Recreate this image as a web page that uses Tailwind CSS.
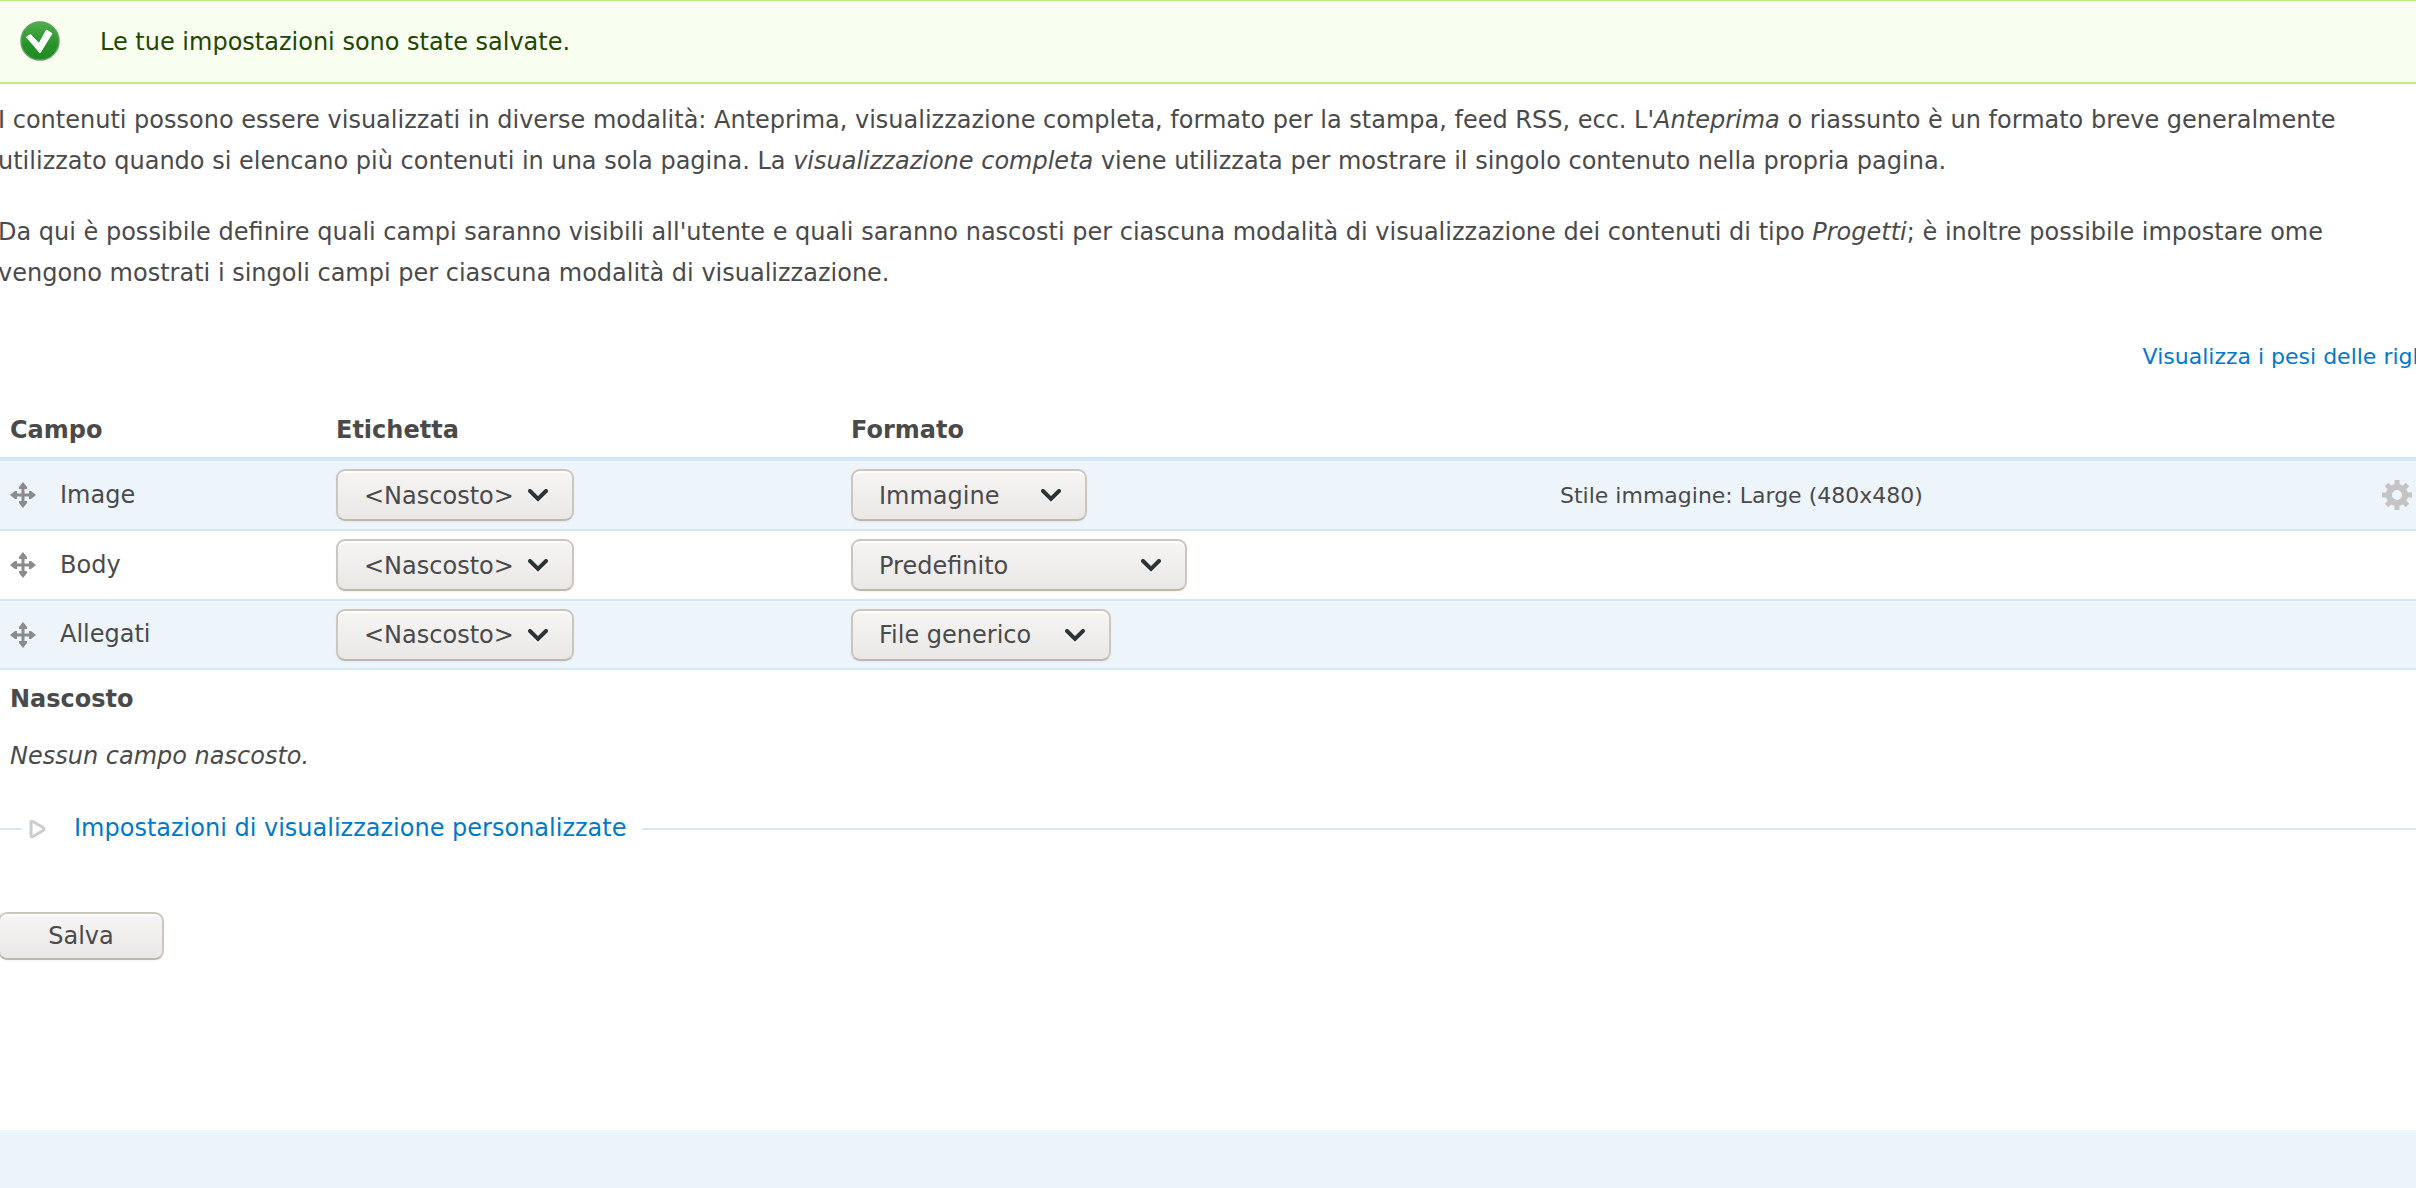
<!DOCTYPE html>
<html lang="it">
<head>
  <meta charset="UTF-8" />
  <meta name="viewport" content="width=device-width, initial-scale=1.0"/>
  <title>Gestione visualizzazione - Progetti</title>
  <script src="https://cdn.jsdelivr.net/npm/@tailwindcss/browser@4"></script>
</head>
<body class="bg-white min-h-screen flex flex-col overflow-x-hidden font-['DejaVu_Sans',sans-serif] text-[24px] leading-[41px] text-[#4a4a4a]">

  <!-- Shared icons -->
  <svg class="hidden">
    <symbol id="handle" viewBox="0 0 26 26">
      <g fill="#8b8b8b">
        <rect x="11.5" y="4" width="3" height="18"/>
        <rect x="4" y="11.5" width="18" height="3"/>
        <path d="M13 0l4 5v2H9V5zM13 26l4-5v-2H9v2zM0 13l5-4h2v8H5zM26 13l-5-4h-2v8h2z"/>
      </g>
    </symbol>
    <symbol id="chevron" viewBox="0 0 20 14">
      <path d="M2 3.500l8 8 8-8" fill="none" stroke="#fff" stroke-width="4" stroke-linecap="round"/>
      <path d="M2 2l8 8 8-8" fill="none" stroke="#2e3436" stroke-width="4" stroke-linecap="round"/>
    </symbol>
  </svg>

  <!-- Status message -->
  <div role="status" class="flex items-center h-[84px] pl-[20px] gap-[39px] border-t border-b-2 border-[#bbee77] bg-[#f8fff0] text-[#234600]">
    <svg class="size-[41px] shrink-0" viewBox="0 0 41 41">
      <defs>
        <linearGradient id="ok" x1="0" y1="0" x2="0" y2="1">
          <stop offset="0" stop-color="#4fae4b"/>
          <stop offset="0.6" stop-color="#27922a"/>
          <stop offset="1" stop-color="#1f8a22"/>
        </linearGradient>
      </defs>
      <circle cx="20" cy="20" r="19" fill="url(#ok)" stroke="#5f9f5c" stroke-width="1.500"/>
      <path d="M6.500 16l4-2.500 8.500 9L26.500 9l5.500 3.500-12 19.500z" fill="#fff" stroke="#fff" stroke-width="1" stroke-linejoin="round"/>
    </svg>
    <p class="pt-[2px]">Le tue impostazioni sono state salvate.</p>
  </div>

  <main class="flex-1 -ml-[2px] -mr-[24px]">

    <!-- Help text -->
    <div class="pt-[16px] pr-[64px] space-y-[30px]">
      <p>I contenuti possono essere visualizzati in diverse modalità: Anteprima, visualizzazione completa, formato per la stampa, feed RSS, ecc. L'<em>Anteprima</em> o riassunto è un formato breve generalmente utilizzato quando si elencano più contenuti in una sola pagina. La <em>visualizzazione completa</em> viene utilizzata per mostrare il singolo contenuto nella propria pagina.</p>
      <p>Da qui è possibile definire quali campi saranno visibili all'utente e quali saranno nascosti per ciascuna modalità di visualizzazione dei contenuti di tipo <em>Progetti</em>; è inoltre possibile impostare ome vengono mostrati i singoli campi per ciascuna modalità di visualizzazione.</p>
    </div>

    <form>
      <div class="mt-[42px] text-right text-[22px]">
        <a href="#" class="text-[#0079c8]">Visualizza i pesi delle righe</a>
      </div>

      <!-- Fields -->
      <table class="w-full table-fixed border-collapse">
        <colgroup>
          <col class="w-[326px]" />
          <col class="w-[515px]" />
          <col class="w-[709px]" />
          <col />
          <col class="w-[80px]" />
        </colgroup>
        <thead>
          <tr class="h-[82px] border-b-4 border-[#d3e7f4] text-left">
            <th class="pl-[12px] pt-[26px]">Campo</th>
            <th class="pl-[12px] pt-[26px]">Etichetta</th>
            <th class="pl-[12px] pt-[26px]">Formato</th>
            <td></td>
            <td></td>
          </tr>
        </thead>
        <tbody>
          <tr class="h-[71px] border-b-2 border-[#d3e7f4] bg-[#edf4fa]">
            <td class="pl-[12px]">
              <div class="flex items-center gap-[24px]">
                <svg class="size-[26px]"><use href="#handle"/></svg>
                Image
              </div>
            </td>
            <td class="pl-[12px]">
              <div class="relative w-[238px]">
                <select aria-label="Etichetta per Image" class="block w-full h-[52px] appearance-none rounded-[9px] border-2 border-[#ccc6bf] border-b-[#bfb6ac] bg-linear-to-b from-[#f6f5f4] to-[#e9e8e6] inset-shadow-[0_2px_0_#fff] shadow-[0_1px_2px_#0000000d] pl-[26px] pt-[2px]">
                  <option>&lt;Nascosto&gt;</option>
                </select>
                <svg class="absolute right-[26px] top-[20px] w-[20px] h-[14px] pointer-events-none"><use href="#chevron"/></svg>
              </div>
            </td>
            <td class="pl-[12px]">
              <div class="relative w-[236px]">
                <select aria-label="Formato per Image" class="block w-full h-[52px] appearance-none rounded-[9px] border-2 border-[#ccc6bf] border-b-[#bfb6ac] bg-linear-to-b from-[#f6f5f4] to-[#e9e8e6] inset-shadow-[0_2px_0_#fff] shadow-[0_1px_2px_#0000000d] pl-[26px] pt-[2px]">
                  <option>Immagine</option>
                </select>
                <svg class="absolute right-[26px] top-[20px] w-[20px] h-[14px] pointer-events-none"><use href="#chevron"/></svg>
              </div>
            </td>
            <td class="pl-[12px] text-[22px]">Stile immagine: Large (480x480)</td>
            <td class="pr-[28px]">
              <button type="button" aria-label="Modifica" class="block ml-auto size-[30px]">
                <svg class="size-[30px]" viewBox="0 0 30 30">
                  <circle cx="15" cy="15" r="8" fill="none" stroke="#c4c4c4" stroke-width="6"/>
                  <path d="M15 0v5M15 25v5M0 15h5M25 15h5M4.500 4.500l4 4M21.500 21.500l4 4M4.500 25.500l4-4M21.500 8.500l4-4" stroke="#c4c4c4" stroke-width="5"/>
                </svg>
              </button>
            </td>
          </tr>
          <tr class="h-[70px] border-b-2 border-[#d3e7f4]">
            <td class="pl-[12px]">
              <div class="flex items-center gap-[24px]">
                <svg class="size-[26px]"><use href="#handle"/></svg>
                Body
              </div>
            </td>
            <td class="pl-[12px]">
              <div class="relative w-[238px]">
                <select aria-label="Etichetta per Body" class="block w-full h-[52px] appearance-none rounded-[9px] border-2 border-[#ccc6bf] border-b-[#bfb6ac] bg-linear-to-b from-[#f6f5f4] to-[#e9e8e6] inset-shadow-[0_2px_0_#fff] shadow-[0_1px_2px_#0000000d] pl-[26px] pt-[2px]">
                  <option>&lt;Nascosto&gt;</option>
                </select>
                <svg class="absolute right-[26px] top-[20px] w-[20px] h-[14px] pointer-events-none"><use href="#chevron"/></svg>
              </div>
            </td>
            <td class="pl-[12px]">
              <div class="relative w-[336px]">
                <select aria-label="Formato per Body" class="block w-full h-[52px] appearance-none rounded-[9px] border-2 border-[#ccc6bf] border-b-[#bfb6ac] bg-linear-to-b from-[#f6f5f4] to-[#e9e8e6] inset-shadow-[0_2px_0_#fff] shadow-[0_1px_2px_#0000000d] pl-[26px] pt-[2px]">
                  <option>Predefinito</option>
                </select>
                <svg class="absolute right-[26px] top-[20px] w-[20px] h-[14px] pointer-events-none"><use href="#chevron"/></svg>
              </div>
            </td>
            <td></td>
            <td></td>
          </tr>
          <tr class="h-[69px] border-b-2 border-[#d3e7f4] bg-[#edf4fa]">
            <td class="pl-[12px]">
              <div class="flex items-center gap-[24px]">
                <svg class="size-[26px]"><use href="#handle"/></svg>
                Allegati
              </div>
            </td>
            <td class="pl-[12px]">
              <div class="relative w-[238px]">
                <select aria-label="Etichetta per Allegati" class="block w-full h-[52px] appearance-none rounded-[9px] border-2 border-[#ccc6bf] border-b-[#bfb6ac] bg-linear-to-b from-[#f6f5f4] to-[#e9e8e6] inset-shadow-[0_2px_0_#fff] shadow-[0_1px_2px_#0000000d] pl-[26px] pt-[2px]">
                  <option>&lt;Nascosto&gt;</option>
                </select>
                <svg class="absolute right-[26px] top-[20px] w-[20px] h-[14px] pointer-events-none"><use href="#chevron"/></svg>
              </div>
            </td>
            <td class="pl-[12px]">
              <div class="relative w-[260px]">
                <select aria-label="Formato per Allegati" class="block w-full h-[52px] appearance-none rounded-[9px] border-2 border-[#ccc6bf] border-b-[#bfb6ac] bg-linear-to-b from-[#f6f5f4] to-[#e9e8e6] inset-shadow-[0_2px_0_#fff] shadow-[0_1px_2px_#0000000d] pl-[26px] pt-[2px]">
                  <option>File generico</option>
                </select>
                <svg class="absolute right-[26px] top-[20px] w-[20px] h-[14px] pointer-events-none"><use href="#chevron"/></svg>
              </div>
            </td>
            <td></td>
            <td></td>
          </tr>
          <tr class="h-[58px]">
            <th colspan="5" class="pl-[12px] pt-[2px] text-left">Nascosto</th>
          </tr>
          <tr class="h-[56px]">
            <td colspan="5" class="pl-[12px] pt-[2px] italic">Nessun campo nascosto.</td>
          </tr>
        </tbody>
      </table>

      <!-- Collapsed fieldset -->
      <div class="mt-[25px] flex items-center">
        <span class="w-[24px] h-[2px] bg-[#d9e8f3]"></span>
        <svg class="ml-[6px] w-[18px] h-[20px]" viewBox="0 0 18 20">
          <path d="M3 3.500q0-2 2-1l10 6q2 1.500 0 3l-10 6q-2 1-2-1z" fill="none" stroke="#ccc" stroke-width="3"/>
        </svg>
        <a href="#" class="ml-[28px] mr-[16px] text-[#0079c8]">Impostazioni di visualizzazione personalizzate</a>
        <span class="flex-1 h-[2px] bg-[#d9e8f3]"></span>
      </div>

      <button type="button" class="mt-[63px] block w-[166px] h-[48px] rounded-[9px] border-2 border-[#ccc6bf] border-b-[#bfb6ac] bg-linear-to-b from-[#f6f5f4] to-[#e9e8e6] inset-shadow-[0_2px_0_#fff] shadow-[0_1px_2px_#0000000d]">Salva</button>
    </form>
  </main>

  <footer class="h-[58px] bg-[#ebf3fb]"></footer>
</body>
</html>
